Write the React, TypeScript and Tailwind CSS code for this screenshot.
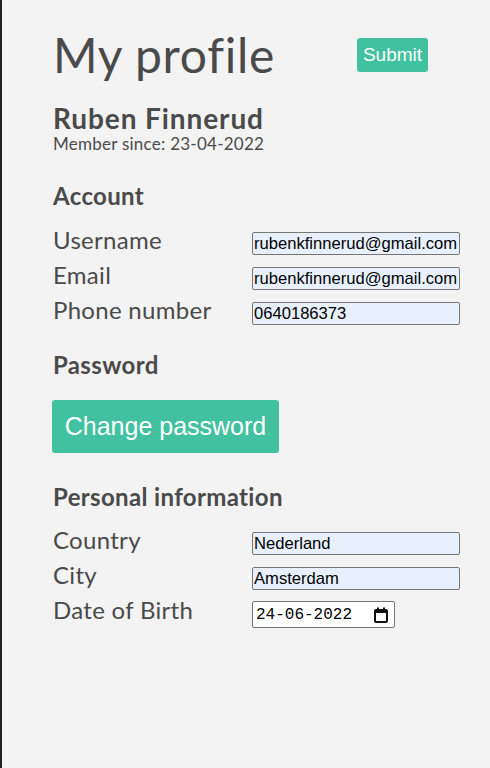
const fieldInput =
  "h-[23px] w-[208px] rounded-[2px] border border-[#767676] bg-[#e8f0fe] pl-[1px] pr-0 text-[16.6px] leading-none text-black font-['Liberation_Sans',Arial,sans-serif] outline-none";

type Field = { label: string; value: string };

const accountFields: Field[] = [
  { label: "Username", value: "rubenkfinnerud@gmail.com" },
  { label: "Email", value: "rubenkfinnerud@gmail.com" },
  { label: "Phone number", value: "0640186373" },
];

const personalFields: Field[] = [
  { label: "Country", value: "Nederland" },
  { label: "City", value: "Amsterdam" },
];

const FieldRow = ({ label, children }: { label: string; children: React.ReactNode }) => {
  return (
    <div className="grid h-[35px] grid-cols-[199px_auto]">
      <span className="text-[24px] leading-[28px] tracking-[0.3px]">{label}</span>
      <div className="flex items-center">{children}</div>
    </div>
  );
};

const CalendarIcon = () => (
  <svg width="14" height="16" viewBox="0 0 14 16" fill="none">
    <rect x="1" y="3" width="12" height="12" rx="1" stroke="#111" strokeWidth="2" />
    <rect x="1" y="3" width="12" height="3" fill="#111" />
    <rect x="3" y="0.5" width="2" height="3" fill="#111" />
    <rect x="9" y="0.5" width="2" height="3" fill="#111" />
  </svg>
);

const App = () => {
  return (
    <div className="min-h-screen border-l-2 border-[#222] bg-[#f3f3f3] pl-[51px] pt-[31px] text-[#4a4a4a] font-['Lato','Open_Sans',sans-serif]">
      <div className="flex items-center">
        <h1 className="w-[304px] text-[48px] leading-none font-normal tracking-[0.7px]">My profile</h1>
        <button className="h-[34px] w-[71px] rounded-[3px] bg-[#41c1a0] text-[19px] text-white font-['Liberation_Sans',Arial,sans-serif]">
          Submit
        </button>
      </div>

      <div className="mt-[25px] flex flex-col">
        <span className="text-[28px] font-bold leading-none tracking-[0.9px]">Ruben Finnerud</span>
        <span className="text-[17px] leading-[24px] tracking-[0.25px]">Member since: 23-04-2022</span>
      </div>

      <h2 className="mt-[28px] text-[24px] font-bold leading-none tracking-[0.35px]">Account</h2>
      <div className="mt-[18px] flex flex-col">
        {accountFields.map((field) => (
          <FieldRow key={`account_${field.label}`} label={field.label}>
            <input className={fieldInput} value={field.value} readOnly />
          </FieldRow>
        ))}
      </div>

      <h2 className="mt-[22px] text-[24px] font-bold leading-none tracking-[0.35px]">Password</h2>
      <button className="-ml-px mt-[23px] h-[53px] w-[227px] rounded-[3px] bg-[#41c1a0] text-[25px] text-white font-['Liberation_Sans',Arial,sans-serif]">
        Change password
      </button>

      <h2 className="mt-[32px] text-[24px] font-bold leading-none tracking-[0.35px]">Personal information</h2>
      <div className="mt-[17px] flex flex-col">
        {personalFields.map((field) => (
          <FieldRow key={`personal_${field.label}`} label={field.label}>
            <input className={fieldInput} value={field.value} readOnly />
          </FieldRow>
        ))}
        <FieldRow label="Date of Birth">
          <div className="mt-[2px] flex h-[27px] w-[143px] items-center justify-between rounded-[2px] border border-[#767676] bg-white pl-[3px] pr-[6px]">
            <span className="text-[16px] text-black font-['Liberation_Mono','DejaVu_Sans_Mono',monospace]">
              24-06-2022
            </span>
            <CalendarIcon />
          </div>
        </FieldRow>
      </div>
    </div>
  );
};

export default App;
